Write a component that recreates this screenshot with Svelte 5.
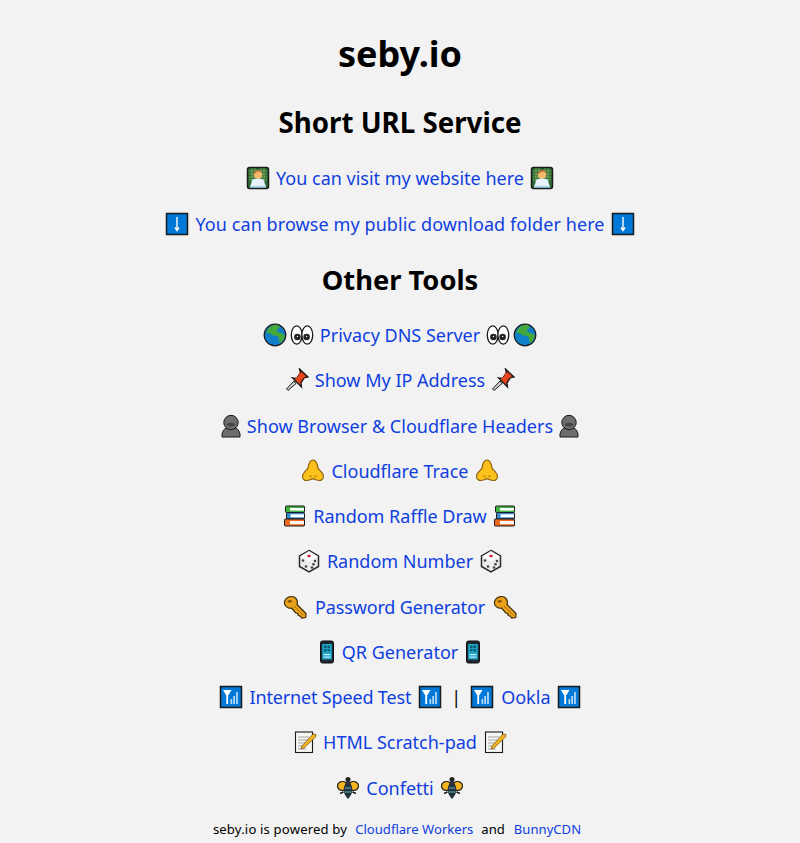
<script>
  const tools = [
    { icons: ['globe', 'eyes'], text: 'Privacy DNS Server', after: ['eyes', 'globe'] },
    { icons: ['pin'], text: 'Show My IP Address', after: ['pin'] },
    { icons: ['ninja'], text: 'Show Browser & Cloudflare Headers', after: ['ninja'], cls: 'narrow' },
    { icons: ['nose'], text: 'Cloudflare Trace', after: ['nose'] },
    { icons: ['books'], text: 'Random Raffle Draw', after: ['books'] },
    { icons: ['die'], text: 'Random Number', after: ['die'] },
    { icons: ['key'], text: 'Password Generator', after: ['key'], cls: 'wide' },
    { icons: ['phone'], text: 'QR Generator', after: ['phone'], cls: 'tight' },
  ];
  const tools2 = [
    { icons: ['memo'], text: 'HTML Scratch-pad', after: ['memo'] },
    { icons: ['bee'], text: 'Confetti', after: ['bee'] },
  ];
</script>

{#snippet icon(name)}
  <svg class="emoji" viewBox="0 0 24 24" aria-hidden="true">
    {#if name === 'coder'}
      <rect x="1.500" y="1.500" width="21" height="21" rx="2" fill="#2f6b34" stroke="#1a1a1a" stroke-width="1.500" />
      <path d="M3 5h18M3 8h18M3 11h18M3 14h18M6 2v14M9 2v14M15 2v14M18 2v14" stroke="#86b56f" stroke-width=".7" />
      <circle cx="12" cy="8.500" r="4.400" fill="#f5b96a" />
      <path d="M7.400 9C7 3 17 2.500 16.600 8.500c-1-2.500-2-3-4-3-2 .500-3.700 1-5.200 3.500z" fill="#a8632a" />
      <path d="M4 21l2.500-7.500q5.500-2 11 0L20 21z" fill="#e6f3fb" />
      <path d="M4 21h16" stroke="#9cc8e2" stroke-width="1.600" />
    {:else if name === 'down'}
      <rect x="1.500" y="1.500" width="21" height="21" fill="#0078d7" stroke="#1a1a1a" stroke-width="1.500" />
      <path d="M12 5v13M10 15.500l2 3 2-3" stroke="#fff" stroke-width="1.400" fill="none" />
    {:else if name === 'globe'}
      <circle cx="12" cy="12" r="10.800" fill="#0f7fc9" stroke="#1a1a1a" stroke-width="1.200" />
      <path d="M3.500 10C4 5 9 1.500 14 1.700c3 1 3.500 3 1 4.300-2 1-1 3 1 3.500 3 .500 5 2 5.800 3.500-.500 3-2.500 6-5 7-1.500-2 0-4-1.500-6-2-2-5-.500-6.500-2.500-1-1.500-3-.500-5.300-1.500z" fill="#45a83b" />
    {:else if name === 'eyes'}
      <ellipse cx="6.700" cy="12" rx="5.400" ry="9.200" fill="#fff" stroke="#1a1a1a" stroke-width="1.300" />
      <ellipse cx="17.300" cy="12" rx="5.400" ry="9.200" fill="#fff" stroke="#1a1a1a" stroke-width="1.300" />
      <circle cx="7.400" cy="14" r="3.300" fill="#222" />
      <circle cx="16.600" cy="14" r="3.300" fill="#222" />
      <circle cx="7.400" cy="13.500" r=".7" fill="#fff" />
      <circle cx="16.600" cy="13.500" r=".7" fill="#fff" />
    {:else if name === 'pin'}
      <path d="M14.500 1l8.500 8-3.500.5-3.500 5.500.5 4-9-9 4 .5 4-5.500z" fill="#e0401a" stroke="#1a1a1a" stroke-width="1.300" />
      <path d="M14 4l6 5.500-4 1-2.500 3.500-3.500-3.500 3.500-2.500z" fill="#e8481c" />
      <path d="M9 13L1.500 21l1.500 1.500 8-7z" fill="#d0d0d0" stroke="#1a1a1a" stroke-width="1" />
    {:else if name === 'ninja'}
      <path d="M3 23v-3q1-5.500 6-6.500h6q5 1 6 6.500v3z" fill="#6e6e6e" stroke="#1a1a1a" stroke-width="1" />
      <circle cx="12" cy="8.500" r="7.200" fill="#6e6e6e" stroke="#1a1a1a" stroke-width="1" />
      <path d="M7.500 10q4.500-2.500 9 0q-.5 2.500-4.500 2.500T7.500 10z" fill="#444" />
    {:else if name === 'nose'}
      <path d="M12 1c4 0 4.500 5 5 8 .5 2 5.500 4 5.500 8.500 0 4-3.500 4.500-7 3.500-2-1.300-5-1.300-7 0-3.500 1-7 .500-7-3.500C1.500 13 6.500 11 7 9c.500-3 1-8 5-8z" fill="#fcc21b" stroke="#8a5a10" stroke-width="1.100" />
      <path d="M8 17.500q1.500-1 3 0M13 17.500q1.500-1 3 0" stroke="#b0770f" stroke-width="1" fill="none" />
    {:else if name === 'books'}
      <rect x="2.500" y="2" width="19" height="6.500" rx="1" fill="#3fb23f" stroke="#1a1a1a" />
      <rect x="7" y="4" width="14" height="2.600" fill="#fff" />
      <rect x="3.500" y="8.500" width="18" height="6.500" rx="1" fill="#2f8ad1" stroke="#1a1a1a" />
      <rect x="7.500" y="10.300" width="13.500" height="3" fill="#fff" />
      <rect x="1.500" y="15" width="20" height="7" rx="1" fill="#ef6a1c" stroke="#1a1a1a" />
      <rect x="7" y="17" width="14" height="3.200" fill="#fff" />
    {:else if name === 'die'}
      <path d="M12 1.500l9.500 5.500v10.500L12 23l-9.500-5.500V7z" fill="#ececec" stroke="#2b2b2b" stroke-width="1.500" />
      <path d="M3 7.500l9-5.500 9 5.500-9 5z" fill="#fbfbfb" />
      <ellipse cx="12" cy="7" rx="1.800" ry="1.200" fill="#c8243a" />
      <circle cx="6" cy="11.500" r="1.300" fill="#444" /><circle cx="9" cy="17.500" r="1.300" fill="#444" />
      <circle cx="15" cy="18.500" r="1.300" fill="#444" /><circle cx="18" cy="12" r="1.300" fill="#444" />
      <circle cx="16.500" cy="15.200" r="1.300" fill="#444" />
    {:else if name === 'key'}
      <path d="M2.500 4.500C4.500 1 10.500.500 13 3.500c1.800 2 1.500 4.500 1 6L23 18.500l-.3 4-4 .7-1.700-2.200-1.800-.5-.4-2-2-.5-4.300-5C6.500 13.800 3.500 12.500 2 10 1 8 1.500 6 2.500 4.500z" fill="#eaa21a" stroke="#3d2b0a" stroke-width="1.200" />
      <ellipse cx="6.800" cy="6.300" rx="2.300" ry="1.400" fill="#8a5a0a" />
      <path d="M11 11l9.500 9.500" stroke="#a8700c" stroke-width="1" />
    {:else if name === 'phone'}
      <rect x="5.500" y="1" width="13" height="22" rx="2" fill="#1c2730" stroke="#111" stroke-width="1" />
      <rect x="7.200" y="4" width="9.600" height="15.500" fill="#1ba8c9" />
      <path d="M9 5.500h2.500V8H9zM12.500 5.500H15V8h-2.500zM9 9h2.500v2.500H9zM12.500 9H15v2.500h-2.500z" fill="#0b5a73" />
      <rect x="8.500" y="14" width="7" height="1.200" fill="#c6eef7" />
      <rect x="8.500" y="16.500" width="7" height="1.200" fill="#c6eef7" />
    {:else if name === 'signal'}
      <rect x="1.500" y="1.500" width="21" height="21" fill="#0078d7" stroke="#1a1a1a" stroke-width="1.500" />
      <path d="M4 5h8.500L9.500 10h-2.500zM7.300 10h1.800v9H7.300z" fill="#fff" />
      <path d="M11.500 14h1.700v5h-1.700zM14.300 11h1.700v8h-1.700zM17.100 7h1.700v12h-1.700z" fill="#b9dcf7" />
    {:else if name === 'memo'}
      <rect x="2.500" y="2" width="17" height="20.500" fill="#f6f6f2" stroke="#1a1a1a" stroke-width="1.100" />
      <path d="M5 7h11M5 10h11M5 13h8M5 16h6M5 19h8" stroke="#9a9a9a" stroke-width=".9" />
      <path d="M8 19l1-3L20 4l3 .5-.5 2.500L11 18z" fill="#f5b51f" stroke="#6c4a08" stroke-width=".7" />
    {:else if name === 'bee'}
      <ellipse cx="6.500" cy="10" rx="5" ry="4.500" fill="#f5b51f" stroke="#1a1a1a" stroke-width="1.200" />
      <ellipse cx="17.500" cy="10" rx="5" ry="4.500" fill="#f5b51f" stroke="#1a1a1a" stroke-width="1.200" />
      <circle cx="12" cy="3.500" r="2.500" fill="#222" />
      <path d="M12 4c3 3 5 8 4.200 12-1 3-2.700 5.500-4.200 7-1.500-1.500-3.200-4-4.200-7C7 12 9 7 12 4z" fill="#26323a" />
      <path d="M9 12h6M8.500 16h7" stroke="#4f8a9a" stroke-width="1.400" />
      <path d="M4 17.500l3.500-1.500M20 17.500l-3.500-1.500" stroke="#1a1a1a" stroke-width="1.400" />
    {/if}
  </svg>
{/snippet}

{#snippet row(item)}
  <p class="line {item.cls ?? ''}">
    <span class="set">{#each item.icons as i}{@render icon(i)}{/each}</span>
    <a href="#top">{item.text}</a>
    <span class="set">{#each item.after as i}{@render icon(i)}{/each}</span>
  </p>
{/snippet}

<main>
  <h1>seby.io</h1>
  <h2 class="first">Short URL Service</h2>
  {@render row({ icons: ['coder'], text: 'You can visit my website here', after: ['coder'] })}
  {@render row({ icons: ['down'], text: 'You can browse my public download folder here', after: ['down'], cls: 'down' })}
  <h2 class="second">Other Tools</h2>
  {#each tools as item}{@render row(item)}{/each}
  <p class="line speed">
    {@render icon('signal')}
    <a href="#top">Internet Speed Test</a>
    {@render icon('signal')}
    <span class="bar">|</span>
    {@render icon('signal')}
    <a href="#top">Ookla</a>
    {@render icon('signal')}
  </p>
  {#each tools2 as item}{@render row(item)}{/each}
  <footer>
    <span>seby.io is powered by</span>
    <a href="#top">Cloudflare Workers</a>
    <span>and</span>
    <a href="#top" class="last">BunnyCDN</a>
  </footer>
</main>

<style>
  :global(body) {
    margin: 0;
    background: #f2f2f2;
    color: #000;
    font-family: "Noto Sans", "Open Sans", sans-serif;
  }
  main {
    display: flex;
    flex-direction: column;
    align-items: center;
    height: 843px;
    overflow: hidden;
  }
  h1 {
    margin: 29px 0 0;
    font-size: 36px;
    line-height: 50px;
    font-weight: 700;
  }
  h2 {
    margin: 24px 0 0;
    font-size: 27.3px;
    line-height: 38px;
    font-weight: 700;
  }
  h2.first {
    font-size: 27.7px;
  }
  h2.second {
    margin-top: 14px;
  }
  .line {
    margin: 0;
    height: 45.25px;
    display: flex;
    align-items: center;
    gap: 6px;
    font-size: 18px;
    white-space: nowrap;
  }
  h2 + .line {
    margin-top: 14px;
  }
  h2.second + .line {
    margin-top: 13.9px;
  }
  .line.down {
    margin-top: 1px;
    letter-spacing: 0.09px;
  }
  .line.tight {
    gap: 3px;
  }
  .line.narrow {
    gap: 4px;
    letter-spacing: 0.03px;
  }
  .line.wide {
    gap: 8px;
    letter-spacing: -0.15px;
  }
  .line.speed {
    gap: 7px;
  }
  .line.speed a:first-of-type {
    letter-spacing: -0.16px;
  }
  .bar {
    margin: 0 2px;
  }
  .set {
    display: flex;
    gap: 3px;
  }
  a {
    color: #0f3fe0;
    text-decoration: none;
  }
  .emoji {
    width: 24px;
    height: 24px;
    flex: none;
  }
  footer {
    margin-top: 10.1px;
    padding-right: 6px;
    font-size: 13.1px;
    display: flex;
    gap: 8px;
  }
  footer span:first-child {
    letter-spacing: 0.17px;
  }
  footer .last {
    margin-left: 1px;
  }
</style>
